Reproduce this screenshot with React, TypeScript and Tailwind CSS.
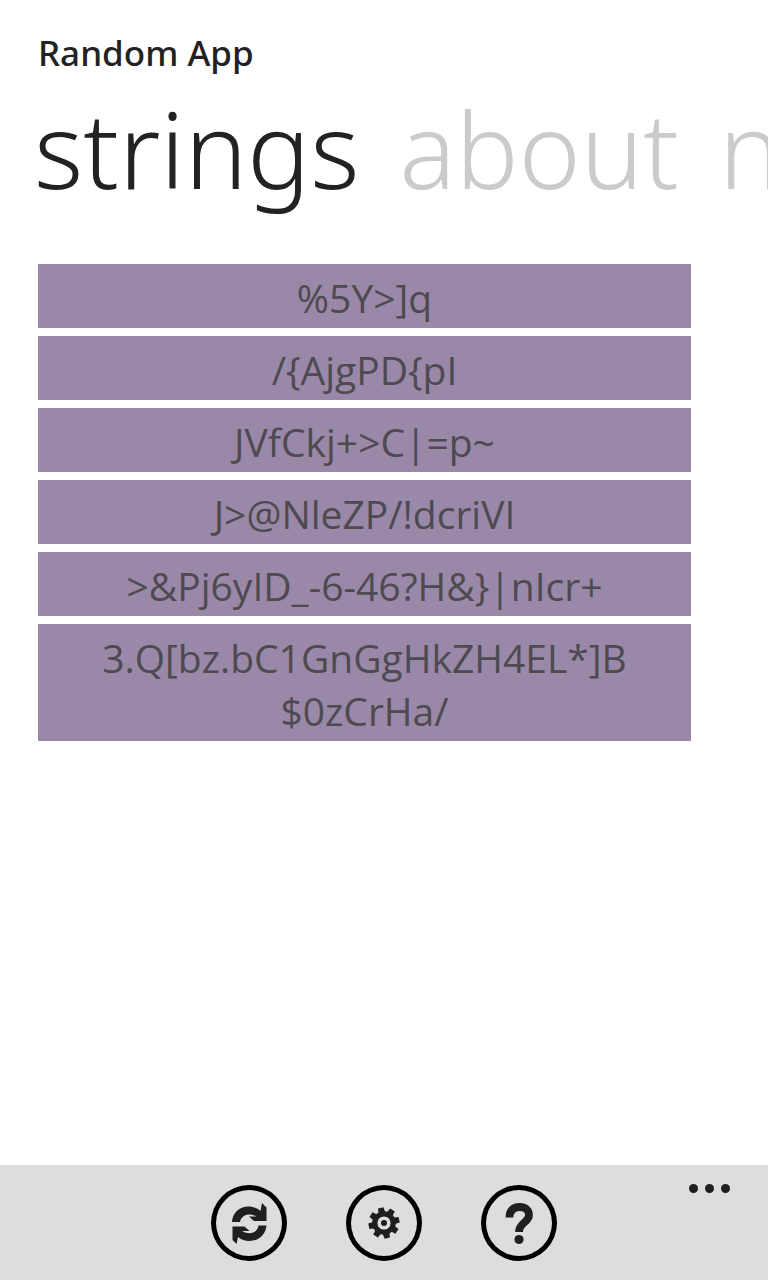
const strings: string[] = [
  "%5Y>]q",
  "/{AjgPD{pI",
  "JVfCkj+>C|=p~",
  "J>@NleZP/!dcriVI",
  ">&Pj6yID_-6-46?H&}|nIcr+",
  "3.Q[bz.bC1GnGgHkZH4EL*]B $0zCrHa/",
];

const tabs: string[] = ["strings", "about", "n"];

function RefreshIcon() {
  return (
    <svg viewBox="0 0 76 76" className="size-19" fill="#1f1f1f" aria-hidden="true">
      <path d="M21 37C21.500 28 28 21.500 37.500 21.500C42.500 21.500 46.500 23.500 49.500 26L51 18L55.500 22.500V36H43L38 31.500H45.500C38.500 27.500 30.500 29.500 29 37Z" />
      <path d="M55.500 40.500C54.500 50 47.500 56 38.500 56C34 56 30 54.500 27 52L25.500 59L21.500 55V41.500H33.500L38.500 46H31C38.500 50.500 46.500 48 47.500 40.500Z" />
    </svg>
  );
}

function GearIcon() {
  return (
    <svg viewBox="0 0 76 76" className="size-19" aria-hidden="true">
      <g fill="#1f1f1f">
        {[-12, 33, 78, 123, 168, 213, 258, 303].map((angle) => (
          <path
            key={angle}
            d="M35.200 22.500H40.800L41.500 29H34.500Z"
            transform={`rotate(${angle} 38 38)`}
          />
        ))}
      </g>
      <circle cx="38" cy="38" r="9.200" fill="none" stroke="#1f1f1f" strokeWidth="5.200" />
      <circle cx="38" cy="38" r="3" fill="#1f1f1f" />
    </svg>
  );
}

function HelpIcon() {
  return (
    <svg viewBox="0 0 76 76" className="size-19" aria-hidden="true">
      <path
        d="M28.500 32.500C28.500 25.500 32 22 38.500 22C44.500 22 48 25 48 30C48 37.500 38 37.500 38 47"
        fill="none"
        stroke="#1f1f1f"
        strokeWidth="7.800"
      />
      <circle cx="38" cy="54.500" r="4.600" fill="#1f1f1f" />
    </svg>
  );
}

const actions = [
  { label: "refresh", Icon: RefreshIcon },
  { label: "settings", Icon: GearIcon },
  { label: "help", Icon: HelpIcon },
];

export default function App() {
  return (
    <div className="flex min-h-screen flex-col overflow-hidden bg-white font-['Noto_Sans','Open_Sans',sans-serif] text-[#222222]">
      <header className="px-[38px] pt-7">
        <h1 className="text-[35px] leading-[50px] font-medium">Random App</h1>
      </header>
      <nav className="flex gap-10 overflow-hidden px-[34px] whitespace-nowrap">
        {tabs.map((tab, i) => (
          <button
            key={tab}
            type="button"
            className={
              i === 0
                ? "shrink-0 text-[105px] leading-[142px] font-light"
                : "shrink-0 text-[105px] leading-[142px] font-light text-[#cbcbcb]"
            }
          >
            {tab}
          </button>
        ))}
      </nav>
      <main className="flex-1 pt-11 pr-[77px] pl-[38px] font-['Open_Sans',sans-serif]">
        <ul className="flex flex-col gap-2">
          {strings.map((s) => (
            <li
              key={s}
              className="bg-[#9a88a8] px-14 pt-[7px] pb-1 text-center text-[39px] leading-[53px] text-[#4d4a50]"
            >
              {s}
            </li>
          ))}
        </ul>
      </main>
      <footer className="relative flex justify-center gap-[59px] bg-[#dddddd] pt-5 pr-px pb-[19px]">
        {actions.map(({ label, Icon }) => (
          <button
            key={label}
            type="button"
            aria-label={label}
            className="grid size-19 place-items-center rounded-full shadow-[inset_0_0_0_5px_#000]"
          >
            <Icon />
          </button>
        ))}
        <button type="button" aria-label="more" className="absolute top-[19px] right-[38px] flex gap-[7px]">
          <span className="size-[9px] rounded-full bg-[#1f1f1f]" />
          <span className="size-[9px] rounded-full bg-[#1f1f1f]" />
          <span className="size-[9px] rounded-full bg-[#1f1f1f]" />
        </button>
      </footer>
    </div>
  );
}
